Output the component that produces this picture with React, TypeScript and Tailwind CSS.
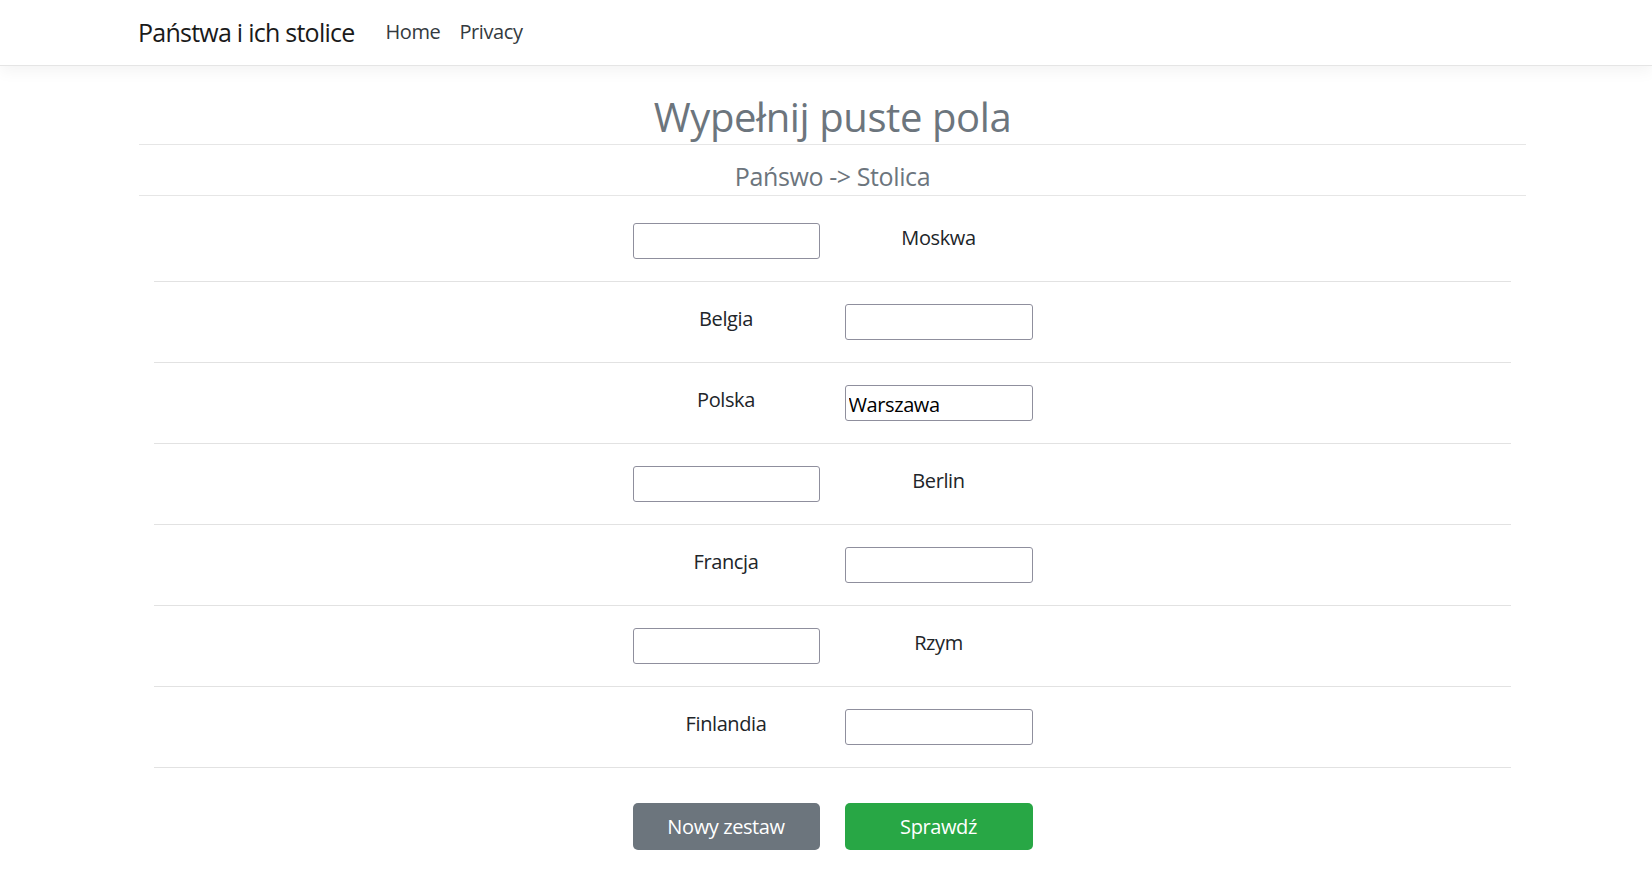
const rows: { left: string | null; right: string | null; value?: string }[] = [
  { left: null, right: 'Moskwa' },
  { left: 'Belgia', right: null },
  { left: 'Polska', right: null, value: 'Warszawa' },
  { left: null, right: 'Berlin' },
  { left: 'Francja', right: null },
  { left: null, right: 'Rzym' },
  { left: 'Finlandia', right: null },
];

function Cell({ text, value }: { text: string | null; value?: string }) {
  if (text) {
    return <div className="text-center text-[20px] leading-[30px] text-[#212529]">{text}</div>;
  }
  return (
    <input
      type="text"
      defaultValue={value}
      className="h-[36px] w-full rounded-[3px] border border-[#8f8f9d] bg-white px-[3px] pt-[2px] text-[20px] tracking-[-0.02em] text-black outline-none"
    />
  );
}

export default function App() {
  return (
    <div className="min-h-screen bg-white font-['Open_Sans',sans-serif] tracking-[-0.025em]">
      <header className="h-[66px] border-b border-[#e5e5e5] bg-white shadow-[0_5px_15px_rgba(0,0,0,0.05)]">
        <div className="ml-[138px] flex h-full items-center pb-[2px]">
          <a href="#" className="mr-[21px] text-[25px] leading-[38px] tracking-[-0.03em] text-[#1a1a1a]">
            Państwa i ich stolice
          </a>
          <nav className="flex items-center text-[20px] text-[#343a40]">
            <a href="#" className="pl-[10px] pr-[9px]">Home</a>
            <a href="#" className="px-[10px]">Privacy</a>
          </nav>
        </div>
      </header>

      <main className="ml-[139px] w-[1387px]">
        <div className="h-[79px] border-b border-[#e6e6e6] pt-[27px] text-center text-[40px] leading-[48px] text-[#6c757d]">
          Wypełnij puste pola
        </div>
        <div className="h-[51px] border-b border-[#e6e6e6] pt-[16px] text-center text-[25px] leading-[30px] text-[#6c757d]">
          Pańswo -&gt; Stolica
        </div>

        <div className="mx-[15px] mt-[5px]">
          {rows.map((r, i) => (
            <div key={i} className="h-[81px] border-b border-[#e2e2e2] pt-[22px]">
              <div className="mx-auto grid w-[400px] grid-cols-[187px_188px] items-start gap-x-[25px]">
                <Cell text={r.left} value={r.left ? undefined : r.value} />
                <Cell text={r.right} value={r.right ? undefined : r.value} />
              </div>
            </div>
          ))}
          <div className="mx-auto mt-[35px] grid w-[400px] grid-cols-[187px_188px] gap-x-[25px]">
            <button className="h-[47px] rounded-[5px] bg-[#6c757d] text-[20px] text-white">Nowy zestaw</button>
            <button className="h-[47px] rounded-[5px] bg-[#28a745] text-[20px] text-white">Sprawdź</button>
          </div>
        </div>
      </main>
    </div>
  );
}
